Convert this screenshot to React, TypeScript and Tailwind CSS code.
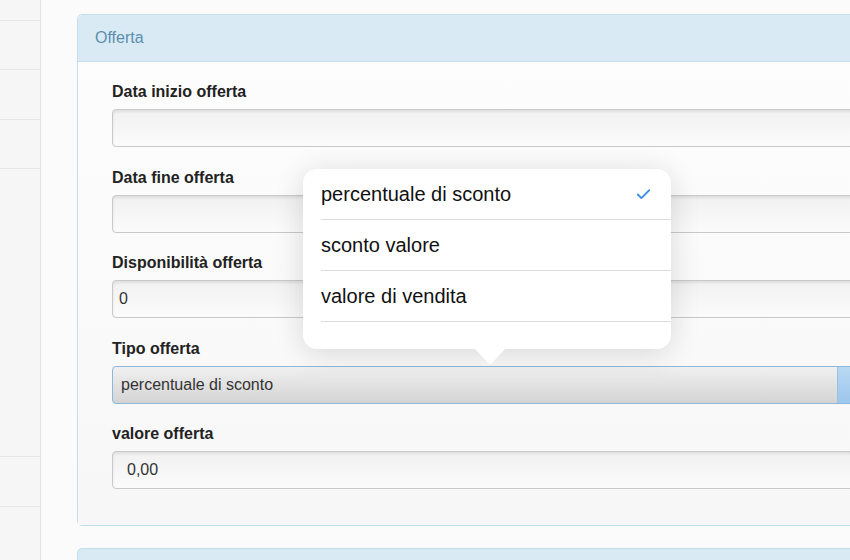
import { Check } from "lucide-react"

const font = { fontFamily: '"Liberation Sans", Arial, Helvetica, sans-serif' }

interface Field {
  label: string
  value?: string
  pad?: string
}

const fields: Field[] = [
  { label: "Data inizio offerta" },
  { label: "Data fine offerta" },
  { label: "Disponibilità offerta", value: "0", pad: "pl-[6px]" },
]

function TextInput({ value, pad }: { value?: string; pad?: string }) {
  return (
    <div
      className={`h-[38px] w-full rounded-[4px] border border-[#c9c9c9] bg-gradient-to-b from-[#f1f1f1] to-[#fbfbfb] shadow-[inset_0_2px_3px_rgba(0,0,0,0.08)] flex items-center text-[16px] text-[#333] ${pad ?? "pl-[14px]"}`}
    >
      {value}
    </div>
  )
}

function Label({ children }: { children: React.ReactNode }) {
  return <div className="h-[26px] leading-[25px] text-[16px] font-bold text-[#222] mb-[4px]">{children}</div>
}

const options = ["percentuale di sconto", "sconto valore", "valore di vendita"]

export default function App() {
  return (
    <div className="relative w-[850px] h-[560px] overflow-hidden bg-[#fbfbfb] flex" style={font}>
      {/* side list */}
      <div className="w-[41px] shrink-0 bg-[#f6f6f6] border-r border-[#e4e4e4] flex flex-col">
        <div className="h-[21px] border-b border-[#e6e6e6]" />
        <div className="h-[49px] border-b border-[#e6e6e6]" />
        <div className="h-[50px] border-b border-[#e6e6e6]" />
        <div className="h-[49px] border-b border-[#e6e6e6]" />
        <div className="h-[288px] border-b border-[#e6e6e6]" />
        <div className="h-[50px] border-b border-[#e6e6e6]" />
      </div>

      {/* main */}
      <div className="flex-1 pl-[36px] pt-[14px]">
        <div className="w-[860px] rounded-[5px] border border-[#c3dfec] bg-[#fafafa]">
          <div className="h-[47px] bg-[#d9eaf5] border-b border-[#c3dfec] rounded-t-[5px] flex items-center pl-[17px] text-[16px] text-[#5b8fae]">
            Offerta
          </div>
          <div className="pl-[34px] pt-[17px] pb-[36px] bg-gradient-to-b from-[#fdfdfd] to-[#f7f7f7]">
            {fields.map((f) => (
              <div key={f.label} className="mb-[17.5px]">
                <Label>{f.label}</Label>
                <TextInput value={f.value} pad={f.pad} />
              </div>
            ))}
            <div className="mb-[17.5px]">
              <Label>Tipo offerta</Label>
              <div className="h-[38px] w-full rounded-[4px] border border-[#8cb8dc] bg-gradient-to-b from-[#f0f0f0] to-[#d4d4d4] flex items-stretch overflow-hidden">
                <div className="flex-1 flex items-center pl-[8px] text-[16px] text-[#333]">percentuale di sconto</div>
                <div className="w-[98px] bg-gradient-to-b from-[#b9d8f3] to-[#9cc6ec] border-l border-[#9cc1e0]" />
              </div>
            </div>
            <div>
              <Label>valore offerta</Label>
              <TextInput value="0,00" />
            </div>
          </div>
        </div>
        <div className="mt-[22px] w-[860px] h-[40px] rounded-t-[5px] border border-[#c3dfec] bg-[#d9eaf5]" />
      </div>

      {/* popover */}
      <div className="absolute left-[303px] top-[169px] w-[368px] h-[180px] rounded-[14px] bg-white shadow-[0_4px_30px_rgba(0,0,0,0.14)] pl-[18px]">
        {options.map((o, i) => (
          <div
            key={o}
            className={`h-[51px] border-b border-[#dcdcdc] flex items-center justify-between pr-[19px] text-[20px] text-[#111] ${i === 0 ? "h-[50px]" : ""}`}
          >
            <span>{o}</span>
            {i === 0 && <Check size={17} strokeWidth={2.6} className="text-[#3c8fe3]" />}
          </div>
        ))}
      </div>
      <svg className="absolute left-[474px] top-[348px]" width="32" height="17" viewBox="0 0 32 17">
        <path d="M0 0 L14.5 15.5 Q16 17 17.5 15.5 L32 0 Z" fill="#ffffff" />
      </svg>
    </div>
  )
}
